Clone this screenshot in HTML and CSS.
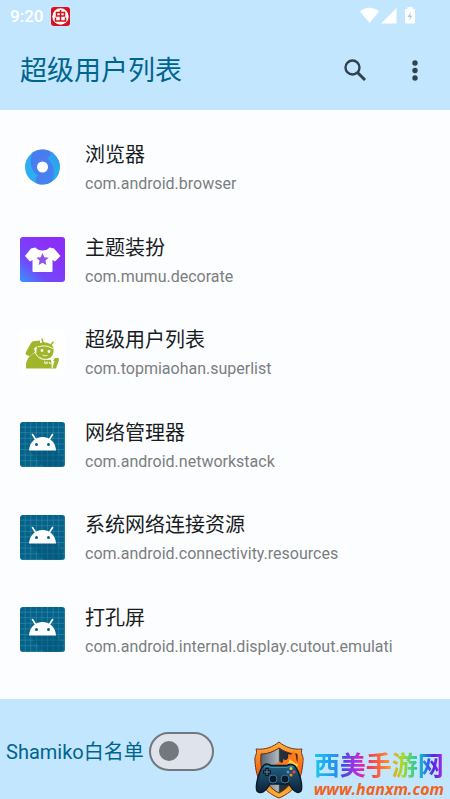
FILE: index.html
```html
<!DOCTYPE html>
<html lang="zh-CN">
<head>
<meta charset="utf-8">
<meta name="viewport" content="width=device-width, initial-scale=1">
<title>超级用户列表</title>
<link rel="stylesheet" href="styles.css">
</head>
<body>
<svg class="defs" aria-hidden="true">
  <defs>
    <pattern id="grid" width="5.6" height="5.6" patternUnits="userSpaceOnUse">
      <path d="M5.3 0V5.6M0 5.3H5.6" stroke="#3f8fae" stroke-width=".6"/>
    </pattern>
    <symbol id="droid" viewBox="0 0 45 45">
      <rect width="45" height="45" rx="3" fill="#05638a"/>
      <rect width="45" height="45" rx="3" fill="url(#grid)"/>
      <path d="M9 28.500H36L42 36V42Q42 45 39 45H24Z" fill="#045477" opacity=".5"/>
      <path d="M12.500 12.500L16 18M32.500 12.500L29 18" stroke="#fff" stroke-width="1.600" stroke-linecap="round"/>
      <path d="M9 28.500C9.500 20.500 15 15 22.500 15S35.500 20.500 36 28.500Z" fill="#fff"/>
      <circle cx="16.500" cy="22.500" r="1.500" fill="#05638a"/>
      <circle cx="28.500" cy="22.500" r="1.500" fill="#05638a"/>
    </symbol>
  </defs>
</svg>

<header class="top">
  <div class="status">
    <span class="clock">9:20</span>
    <svg class="badge" viewBox="0 0 19 19" aria-hidden="true">
      <rect width="19" height="19" rx="3" fill="#d8101c"/>
      <circle cx="9.500" cy="9.500" r="8.200" fill="#fff"/>
      <path d="M9.500 3V14M5.500 5.500H13.500V9H5.500ZM4.500 10.500V14H14.500V10.500" fill="none" stroke="#d8101c" stroke-width="1.500"/>
    </svg>
    <svg class="signals" viewBox="0 0 56 18" aria-hidden="true">
      <g fill="#fff">
        <path d="M0 4.500C5-.5 14-.5 19 4.500L9.500 16Z"/>
        <path d="M21 16.500H36.500V1Z"/>
        <path d="M47.500 0H52.500V2H54Q55 2 55 3V15.500Q55 16.500 54 16.500H46Q45 16.500 45 15.500V3Q45 2 46 2H47.500Z"/>
      </g>
      <path d="M51 4.500L47.500 10H50L49 14L52.500 8.500H50Z" fill="#9fd0ee"/>
    </svg>
  </div>
  <div class="bar">
    <h1 class="title">超级用户列表</h1>
    <button class="icon-button" type="button" aria-label="搜索">
      <svg viewBox="0 0 24 24" aria-hidden="true"><circle cx="9.500" cy="8.500" r="7" fill="none" stroke="#31424e" stroke-width="2.400"/><path d="M14.500 13.500L22 21" stroke="#31424e" stroke-width="3"/></svg>
    </button>
    <button class="icon-button" type="button" aria-label="更多">
      <svg viewBox="0 0 24 24" aria-hidden="true"><g fill="#31424e"><circle cx="12" cy="4" r="2.700"/><circle cx="12" cy="11.500" r="2.700"/><circle cx="12" cy="19" r="2.700"/></g></svg>
    </button>
  </div>
</header>

<main class="content">
  <ul class="apps">
    <li class="app">
      <svg class="app-icon" viewBox="0 0 45 45" aria-hidden="true">
        <defs>
          <linearGradient id="ring" x1="1" y1="0" x2="0" y2="1"><stop offset="0" stop-color="#3d8cf1"/><stop offset=".3" stop-color="#2ca6ee"/><stop offset=".7" stop-color="#2bb0ef"/><stop offset="1" stop-color="#2ea8ef"/></linearGradient>
          <linearGradient id="swirl" x1="0" y1="0" x2="1" y2="1"><stop offset="0" stop-color="#4b72ee"/><stop offset=".5" stop-color="#5175f0"/><stop offset="1" stop-color="#4280f0"/></linearGradient>
        </defs>
        <rect width="45" height="45" rx="3" fill="#fff"/>
        <circle cx="22.500" cy="22" r="17.500" fill="url(#ring)"/>
        <path d="M13 7.300A17.500 17.500 0 0 1 28 5.400C34 9 28 13 27 13.500C34 17 36 30 31.500 37A17.500 17.500 0 0 1 18 39C13 36 17 31 18 30.500C10 26 9 14 13 7.300Z" fill="url(#swirl)" opacity=".85"/>
        <circle cx="22.500" cy="22" r="5.500" fill="#fff"/>
      </svg>
      <div class="app-text"><h2 class="name">浏览器</h2><p class="package">com.android.browser</p></div>
    </li>
    <li class="app">
      <svg class="app-icon" viewBox="0 0 45 45" aria-hidden="true">
        <defs><linearGradient id="shirt" x1="0" y1="1" x2=".7" y2=".2"><stop offset="0" stop-color="#3199ff"/><stop offset=".4" stop-color="#7149fa"/><stop offset="1" stop-color="#8b2ff8"/></linearGradient></defs>
        <rect width="45" height="45" rx="3" fill="url(#shirt)"/>
        <path d="M15.500 10.500C18 14.500 27 14.500 29.500 10.500L34 11.500L40.500 19L35 24.500L32.500 23V34Q32.500 35 31.500 35H13.500Q12.500 35 12.500 34V23L10 24.500L5 19L11 11.500Z" fill="#fff"/>
        <path d="M22.500 16L24.300 20.300L28.800 20.700L25.400 23.600L26.400 28L22.500 25.700L18.600 28L19.600 23.600L16.200 20.700L20.700 20.300Z" fill="#9150e8"/>
      </svg>
      <div class="app-text"><h2 class="name">主题装扮</h2><p class="package">com.mumu.decorate</p></div>
    </li>
    <li class="app">
      <svg class="app-icon" viewBox="0 0 45 45" aria-hidden="true">
        <rect width="45" height="45" rx="3" fill="#fff"/>
        <g fill="#a0b52a">
          <path d="M6 38.500V35C6 31 8 28 10 26L16 22L20 28L31 30L32 38.500Z"/>
          <path d="M6 22L11 13Q12 11 15 11L20 10.500L20 14L14 18.500L15 22L10 26Q4 25 6 22Z"/>
          <path d="M16.500 20C17 14 21 11.500 26 12.500C32 13.500 34.500 17 33.500 22C32.500 27.500 28 30 23.500 28.500C18.500 27.500 16 24 16.500 20Z"/>
          <path d="M33.500 30L35 28L38.500 28L39 30L36 38.500H32Z"/>
        </g>
        <path d="M22 9L23 13M33 12L31 15" stroke="#a0b52a" stroke-width="1.500" stroke-linecap="round"/>
        <path d="M15 22C17 28 23 31 29 29M18 17C23 15 29 16 33.500 19M32 38L34 31" fill="none" stroke="#fff" stroke-width=".9"/>
        <circle cx="22" cy="20.500" r="1.400" fill="#fff"/><circle cx="29" cy="21.500" r="1.400" fill="#fff"/>
        <path d="M22.500 25Q25 26.500 27.500 25.500" fill="none" stroke="#fff" stroke-width=".8"/>
        <path d="M24.500 31.500L25.500 34M27 31.500V34M29 32L30.500 34" fill="none" stroke="#fff" stroke-width="1.100"/>
      </svg>
      <div class="app-text"><h2 class="name">超级用户列表</h2><p class="package">com.topmiaohan.superlist</p></div>
    </li>
    <li class="app">
      <svg class="app-icon" viewBox="0 0 45 45" aria-hidden="true"><use href="#droid"/></svg>
      <div class="app-text"><h2 class="name">网络管理器</h2><p class="package">com.android.networkstack</p></div>
    </li>
    <li class="app">
      <svg class="app-icon" viewBox="0 0 45 45" aria-hidden="true"><use href="#droid"/></svg>
      <div class="app-text"><h2 class="name">系统网络连接资源</h2><p class="package">com.android.connectivity.resources</p></div>
    </li>
    <li class="app">
      <svg class="app-icon" viewBox="0 0 45 45" aria-hidden="true"><use href="#droid"/></svg>
      <div class="app-text"><h2 class="name">打孔屏</h2><p class="package">com.android.internal.display.cutout.emulati</p></div>
    </li>
  </ul>
</main>

<footer class="bottom">
  <label class="option" for="whitelist">Shamiko白名单</label>
  <input class="switch" id="whitelist" type="checkbox" role="switch">
  <div class="brand">
    <svg class="shield" viewBox="0 0 52 58" aria-hidden="true">
      <defs>
        <linearGradient id="rim" x1="0" y1="0" x2="0" y2="1"><stop offset="0" stop-color="#ffb03c"/><stop offset=".5" stop-color="#ef6a17"/><stop offset="1" stop-color="#ffb735"/></linearGradient>
        <linearGradient id="plate" x1="0" y1="0" x2="1" y2="0"><stop offset="0" stop-color="#59636e"/><stop offset=".48" stop-color="#aeb9c1"/><stop offset=".52" stop-color="#26333f"/><stop offset="1" stop-color="#1a222c"/></linearGradient>
        <linearGradient id="pad" x1="0" y1="0" x2="0" y2="1"><stop offset="0" stop-color="#246184"/><stop offset="1" stop-color="#0c2237"/></linearGradient>
      </defs>
      <path d="M26 1C32 6 40 9 49 8C47 13 51 15 50 20C49 38 43 50 26 57C9 50 3 38 2 20C1 15 5 13 3 8C12 9 20 6 26 1Z" fill="url(#rim)" stroke="#7b2d16"/>
      <path d="M26 7C32 11 38 13 44 13C45 28 42 44 26 52C10 44 7 28 8 13C14 13 20 11 26 7Z" fill="url(#plate)" stroke="#612714"/>
      <path d="M20 26C22 21 25 23 27 20C28 24 31 21 30 18C34 21 36 17 35 13C39 15 40 12 40 9C45 15 42 19 45 21L50 18C49 24 47 28 45 32H22Z" fill="#ff7818"/>
      <path d="M29 26C34 25 37 21 36 18C41 20 41 23 45 23L43 29H29Z" fill="#ffd34c"/>
      <path d="M11 24Q14 22 18 24.500H34Q38 22 42 25C47 32 50 45 48 50C44 54 40 49 36 43H17C13 50 8 54 4 50C2 45 6 29 11 24Z" fill="url(#pad)" stroke="#0a1c2a" stroke-width="1.500"/>
      <path d="M11 26Q15 24 18 26.500H34Q38 24 41 26" fill="none" stroke="#3c91b2"/>
      <path d="M14 27V35M10 31H18" stroke="#0a1726" stroke-width="3.500"/>
      <path d="M14 28V34M11 31H17" stroke="#62899d"/>
      <circle cx="20" cy="38" r="4" fill="#0a1a29" stroke="#3b7595"/><circle cx="32" cy="38" r="4" fill="#0a1a29" stroke="#3b7595"/>
      <circle cx="38" cy="27.500" r="1.500" fill="#ffca43"/><circle cx="41" cy="31" r="1.500" fill="#f64a35"/><circle cx="38" cy="34" r="1.500" fill="#f98a2b"/><circle cx="35" cy="31" r="1.500" fill="#419bd4"/>
    </svg>
    <div class="brand-text">
      <strong class="brand-name">西美手游网</strong>
      <span class="brand-url">www.hanxm.com</span>
    </div>
  </div>
</footer>
</body>
</html>
```
FILE: styles.css
```css
* {
  box-sizing: border-box;
}

body {
  margin: 0;
  min-height: 100vh;
  display: flex;
  flex-direction: column;
  background: #fbfdff;
  color: #191c1e;
  font-family: Roboto, "Noto Sans CJK SC", sans-serif;
}

h1, h2, p, ul {
  margin: 0;
  padding: 0;
  font-weight: 400;
}

.defs {
  position: absolute;
  width: 0;
  height: 0;
}

.top {
  background: #c3e6ff;
}

.status {
  display: flex;
  align-items: center;
  gap: 8px;
  height: 32px;
  padding: 0 34px 0 10px;
}

.clock {
  color: #fff;
  font-size: 17px;
  font-weight: 500;
  line-height: 20px;
}

.badge {
  width: 19px;
  height: 19px;
}

.signals {
  width: 56px;
  height: 18px;
  margin-left: auto;
}

.bar {
  display: flex;
  align-items: center;
  gap: 12px;
  height: 78px;
  padding: 0 11px 0 20px;
}

.title {
  flex: 1;
  color: #00658c;
  font-size: 27px;
  line-height: 38px;
}

.icon-button {
  display: grid;
  place-items: center;
  width: 48px;
  height: 48px;
  padding: 0;
  border: 0;
  border-radius: 50%;
  background: none;
}

.icon-button svg {
  width: 24px;
  height: 24px;
}

.content {
  flex: 1;
  display: flex;
  padding: 11px 0 23px;
}

.apps {
  flex: 1;
  display: grid;
  grid-auto-rows: 1fr;
  list-style: none;
}

.app {
  display: flex;
  align-items: center;
  gap: 20px;
  padding: 0 20px;
}

.app-icon {
  flex: none;
  width: 45px;
  height: 45px;
}

.app-text {
  display: grid;
  gap: 4px;
  min-width: 0;
  padding-top: 2px;
}

.name {
  font-size: 20px;
  line-height: 28px;
}

.package {
  color: #7c7e80;
  font-size: 16px;
  line-height: 22px;
  white-space: nowrap;
}

.bottom {
  display: flex;
  align-items: center;
  height: 100px;
  padding: 0 6px;
  background: #c3e6ff;
}

.option {
  color: #00658c;
  font-size: 20px;
  line-height: 28px;
  padding-top: 6px;
}

.switch {
  appearance: none;
  display: flex;
  align-items: center;
  width: 65px;
  height: 39px;
  margin: 4px 0 0 5px;
  padding: 0 8px;
  border: 2px solid #71787e;
  border-radius: 20px;
  background: #dfe3eb;
}

.switch::before {
  content: "";
  width: 20px;
  height: 20px;
  border-radius: 50%;
  background: #71787e;
}

.switch:checked {
  justify-content: flex-end;
}

.brand {
  display: flex;
  align-items: flex-end;
  align-self: flex-end;
  gap: 9px;
  margin-left: auto;
}

.shield {
  width: 52px;
  height: 58px;
}

.brand-text {
  display: grid;
}

.brand-name {
  font-family: "Noto Sans CJK SC", sans-serif;
  font-size: 26px;
  font-weight: 700;
  line-height: 30px;
  color: transparent;
  background: linear-gradient(90deg, #18c9ef 0%, #258df0 18%, #3d4be8 21%, #ca28d9 35%, #f12a62 40%, #ff9420 58%, #a6db22 68%, #16c7b4 80%, #2578ef 86%, #5926dc 92%, #ab2ceb 100%);
  background-clip: text;
}

.brand-url {
  color: #ee641e;
  font-family: "Open Sans", sans-serif;
  font-size: 16px;
  font-style: italic;
  font-weight: 700;
  line-height: 20px;
}
```
